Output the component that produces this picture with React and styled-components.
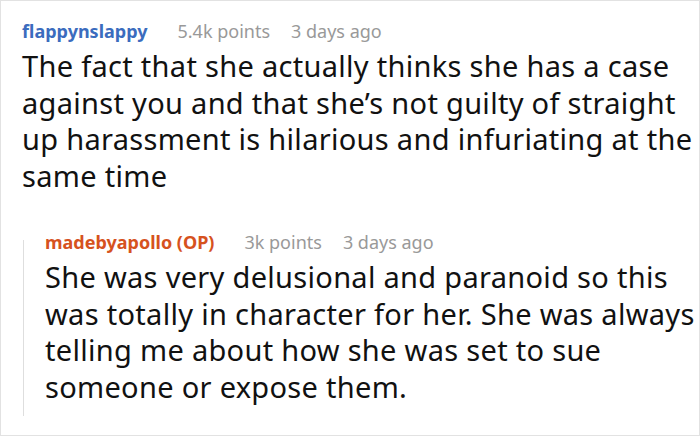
import React from "react";
import styled, { createGlobalStyle } from "styled-components";

const Global = createGlobalStyle`
  html, body { margin: 0; padding: 0; background: #fff; }
  body { font-family: "Noto Sans", "Open Sans", sans-serif; }
`;

const Frame = styled.div`
  box-sizing: border-box;
  width: 700px;
  height: 436px;
  border: 1px solid #e2e2e2;
  padding: 16px 4px 0 21px;
  overflow: hidden;
`;

const Comment = styled.div`
  display: flex;
  flex-direction: column;
`;

const Meta = styled.div`
  display: flex;
  align-items: baseline;
  gap: 21px;
  font-size: 18px;
  line-height: 28px;
  white-space: nowrap;
`;

const Author = styled.span`
  font-weight: 700;
  color: ${(p) => p.$color};
  margin-right: 9px;
`;

const Info = styled.span`
  color: #999;
`;

const Body = styled.p`
  margin: 3px 0 0;
  font-size: 29px;
  line-height: 36.7px;
  letter-spacing: 0.3px;
  color: #111;
  white-space: nowrap;
`;

const Reply = styled.div`
  display: flex;
  margin-top: 33px;
  padding-left: 1px;
`;

const Rail = styled.div`
  width: 1px;
  background: #dedede;
  margin-top: 12px;
  flex-shrink: 0;
`;

const ReplyInner = styled.div`
  padding-left: 21px;
  padding-bottom: 10px;
`;

export default function App() {
  return (
    <>
      <Global />
      <Frame>
        <Comment>
          <Meta>
            <Author $color="#3b6cbe">flappynslappy</Author>
            <Info>5.4k points</Info>
            <Info>3 days ago</Info>
          </Meta>
          <Body>
            The fact that she actually thinks she has a case<br />
            against you and that she’s not guilty of straight<br />
            up harassment is hilarious and infuriating at the<br />
            same time
          </Body>
        </Comment>
        <Reply>
          <Rail />
          <ReplyInner>
            <Meta>
              <Author $color="#d6521e">madebyapollo (OP)</Author>
              <Info>3k points</Info>
              <Info>3 days ago</Info>
            </Meta>
            <Body>
              She was very delusional and paranoid so this<br />
              was totally in character for her. She was always<br />
              telling me about how she was set to sue<br />
              someone or expose them.
            </Body>
          </ReplyInner>
        </Reply>
      </Frame>
    </>
  );
}
